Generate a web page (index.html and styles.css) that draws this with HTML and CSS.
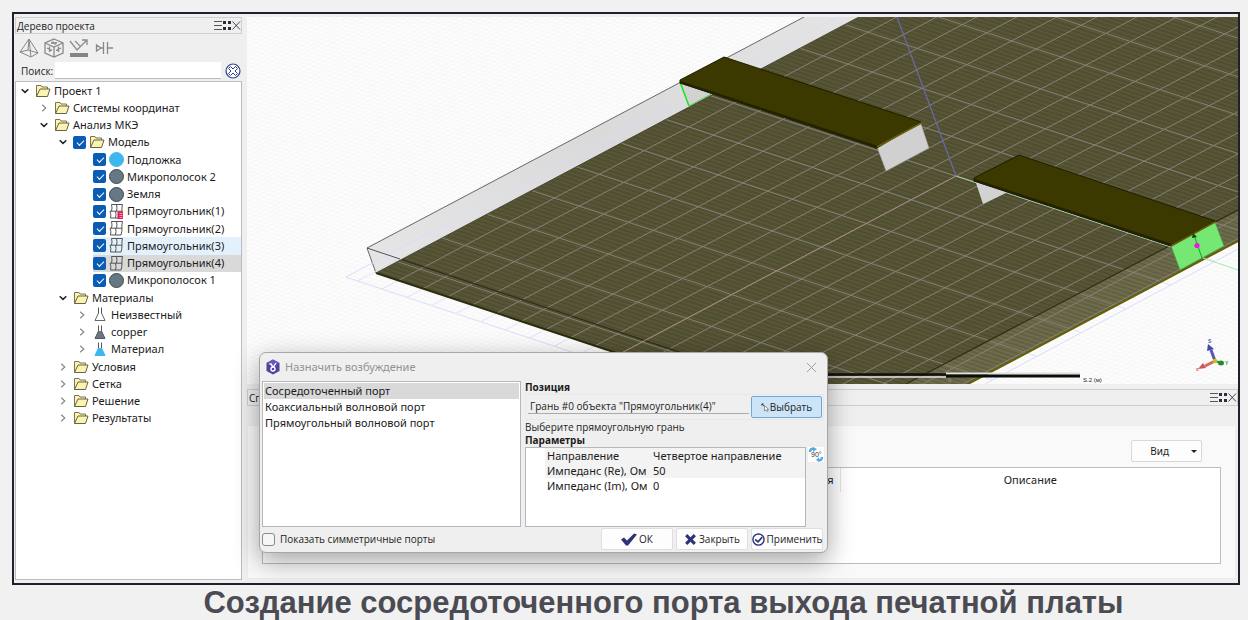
FILE: index.html
```html
<!DOCTYPE html>
<html lang="ru">
<head>
<meta charset="utf-8">
<title>Создание сосредоточенного порта</title>
<link rel="stylesheet" href="styles.css">
</head>
<body>
<svg class="defs" aria-hidden="true">
  <symbol id="folder" viewBox="0 0 16 14"><path d="M1.5 12.5V1.5H6L7 3H12.5V5" fill="#fbf3b4" stroke="#77744f"/><path d="M1.5 12.5L5 5H15L12.5 12.5Z" fill="#fbf3b4" stroke="#66633f"/></symbol>
  <symbol id="down" viewBox="0 0 8 8"><path d="M0.7 2.2L4 5.4L7.3 2.2" fill="none" stroke="#222" stroke-width="1.5"/></symbol>
  <symbol id="right" viewBox="0 0 8 8"><path d="M2.2 0.7L5.8 4L2.2 7.3" fill="none" stroke="#888" stroke-width="1.2"/></symbol>
  <symbol id="rect" viewBox="0 0 14 15"><path d="M2.500 .5Q3.500 4 2.500 7.200M7.500 .5Q8.500 4 7.500 7.200M13.500 .5Q12.500 4 13 7.200M2.500 .5H13.500M1 7.200H13M1 7.200Q2.500 10.500 1.500 14M6.500 7.200Q7.500 10.500 6.500 14M13 7.200Q13 11 12 14M1.500 14H12" fill="none" stroke="currentColor"/></symbol>
  <symbol id="flask" viewBox="0 0 12 15"><path d="M4.500 6.500V.5M7.500 6.500V.5" fill="none" stroke="#555"/><path d="M4.500 6L1 13.500H11L7.500 6" fill="currentColor" stroke="var(--edge)"/></symbol>
  <symbol id="dock" viewBox="0 0 27 12"><path d="M0 1.500H8M0 5.500H8M0 9.500H8" stroke="#555" fill="none"/><path d="M9 1h3v3h-3zM14 1h3v3h-3zM9 7h3v3h-3zM14 7h3v3h-3z" fill="#2c2c3c"/><path d="M18.500 1.500L26 9.500M26 1.500L18.500 9.500" stroke="#444455" fill="none"/></symbol>
</svg>

<main class="window">
  <aside class="project">
    <header class="dock-title"><span>Дерево проекта</span><svg class="dock"><use href="#dock"/></svg></header>
    <div class="tools">
      <button aria-label="Пирамида"><svg viewBox="0 0 20 20"><path d="M10 1L1 14L12 19L19 15ZM10 1L12 19M1 14L9 12L19 15M10 1L9 12" fill="none" stroke="#888"/></svg></button>
      <button aria-label="Куб"><svg viewBox="0 0 20 20"><path d="M10 1L19 5V15L10 19L1 15V5ZM1 5L10 9L19 5M10 9V19M3 10L8 12.500M5.500 8.500V14M12 12.500L17 10M14.500 8.500V14M7 5H13M8.500 3.500L11.500 6.500" fill="none" stroke="#888" stroke-width="1.300"/></svg></button>
      <button aria-label="Отражение"><svg viewBox="0 0 20 20"><path d="M1 3L8 12L18 2M13 2H18V7M6 3L11 8" fill="none" stroke="#8c8c8c" stroke-width="1.300"/><path d="M1 15h18v4H1z" fill="#858585"/></svg></button>
      <button aria-label="Порт"><svg viewBox="0 0 20 20"><path d="M2.500 7V13L7 10ZM7 10H9.500M9.500 4V16M13.500 4V16M13.500 10H19" fill="none" stroke="#888" stroke-width="1.300"/></svg></button>
    </div>
    <div class="search">
      <label for="search">Поиск:</label><input id="search" type="text">
      <button aria-label="Очистить"><svg viewBox="0 0 16 16"><circle cx="8" cy="8" r="7" fill="#fff" stroke="#333f8c" stroke-width="1.200"/><path d="M5.500 3.500L8 6L10.500 3.500L12.500 5.500L10 8L12.500 10.500L10.500 12.500L8 10L5.500 12.500L3.500 10.500L6 8L3.500 5.500Z" fill="none" stroke="#333f8c"/></svg></button>
    </div>
    <div class="tree-box">
    <ul class="tree">
      <li class="l0"><svg class="arrow"><use href="#down"/></svg><svg class="folder"><use href="#folder"/></svg><span>Проект 1</span></li>
      <li class="l1"><svg class="arrow"><use href="#right"/></svg><svg class="folder"><use href="#folder"/></svg><span>Системы координат</span></li>
      <li class="l1"><svg class="arrow"><use href="#down"/></svg><svg class="folder"><use href="#folder"/></svg><span>Анализ МКЭ</span></li>
      <li class="l2"><svg class="arrow"><use href="#down"/></svg><input type="checkbox" checked id="c0"><svg class="folder"><use href="#folder"/></svg><label for="c0">Модель</label></li>
      <li class="l3"><input type="checkbox" checked id="c1"><i class="ball sky"></i><label for="c1">Подложка</label></li>
      <li class="l3"><input type="checkbox" checked id="c2"><i class="ball"></i><label for="c2">Микрополосок 2</label></li>
      <li class="l3"><input type="checkbox" checked id="c3"><i class="ball"></i><label for="c3">Земля</label></li>
      <li class="l3"><input type="checkbox" checked id="c4"><svg class="obj" viewBox="0 0 14 15"><use href="#rect"/><path d="M8.500 7.500h5.500v7.500H8.500z" fill="#e5174f"/><path d="M10.500 9.500h3M10.500 11.500h3M10.500 13.500h3" stroke="#fff" stroke-width=".6"/></svg><label for="c4">Прямоугольник(1)</label></li>
      <li class="l3"><input type="checkbox" checked id="c5"><svg class="obj"><use href="#rect"/></svg><label for="c5">Прямоугольник(2)</label></li>
      <li class="l3 hover"><input type="checkbox" checked id="c6"><svg class="obj"><use href="#rect"/></svg><label for="c6">Прямоугольник(3)</label></li>
      <li class="l3 picked"><input type="checkbox" checked id="c7"><svg class="obj"><use href="#rect"/></svg><label for="c7">Прямоугольник(4)</label></li>
      <li class="l3"><input type="checkbox" checked id="c8"><i class="ball"></i><label for="c8">Микрополосок 1</label></li>
      <li class="l2"><svg class="arrow"><use href="#down"/></svg><svg class="folder"><use href="#folder"/></svg><span>Материалы</span></li>
      <li class="l4"><svg class="arrow"><use href="#right"/></svg><svg class="flask"><use href="#flask"/></svg><span>Неизвестный</span></li>
      <li class="l4"><svg class="arrow"><use href="#right"/></svg><svg class="flask metal"><use href="#flask"/></svg><span>copper</span></li>
      <li class="l4"><svg class="arrow"><use href="#right"/></svg><svg class="flask blue"><use href="#flask"/></svg><span>Материал</span></li>
      <li class="l2"><svg class="arrow"><use href="#right"/></svg><svg class="folder"><use href="#folder"/></svg><span>Условия</span></li>
      <li class="l2"><svg class="arrow"><use href="#right"/></svg><svg class="folder"><use href="#folder"/></svg><span>Сетка</span></li>
      <li class="l2"><svg class="arrow"><use href="#right"/></svg><svg class="folder"><use href="#folder"/></svg><span>Решение</span></li>
      <li class="l2"><svg class="arrow"><use href="#right"/></svg><svg class="folder"><use href="#folder"/></svg><span>Результаты</span></li>
    </ul>
    </div>
  </aside>

  <div class="work">
    <svg class="scene" viewBox="247 17 991 367" preserveAspectRatio="xMinYMin slice" role="img" aria-label="Модель печатной платы">
      <defs>
        <pattern id="fineA" width="40" height="4" patternUnits="userSpaceOnUse" patternTransform="rotate(18)"><path d="M0 2H40" stroke="currentColor" stroke-width="1"/></pattern>
        <pattern id="fineB" width="40" height="4" patternUnits="userSpaceOnUse" patternTransform="rotate(-28)"><path d="M0 2H40" stroke="currentColor" stroke-width="1"/></pattern>
        <linearGradient id="wall" x1="0" y1="1" x2="1" y2="0"><stop offset="0" stop-color="#e6e6e7"/><stop offset=".5" stop-color="#dadadb"/><stop offset="1" stop-color="#e4e4e5"/></linearGradient>
        <clipPath id="board"><path d="M376 273L859 17H1238V241L968 384H710Z"/></clipPath>
        <clipPath id="plane"><path d="M346 277L838 17H1238V249L985 384H668Z"/></clipPath>
        <path id="grid" fill="none" d="M-412 265l2000 656m-1955.2 -679.7l2000 656m-1955.2 -679.7l2000 656m-1955.2 -679.7l2000 656m-1955.2 -679.7l2000 656m-1955.2 -679.7l2000 656m-1955.2 -679.7l2000 656m-1955.2 -679.7l2000 656m-1955.2 -679.7l2000 656m-1955.2 -679.7l2000 656m-1955.2 -679.7l2000 656m-1955.2 -679.7l2000 656m-1955.2 -679.7l2000 656m-1955.2 -679.7l2000 656m-1955.2 -679.7l2000 656m-1955.2 -679.7l2000 656m-1955.2 -679.7l2000 656m-1955.2 -679.7l2000 656m-1955.2 -679.7l2000 656m-1955.2 -679.7l2000 656m-1955.2 -679.7l2000 656m-1955.2 -679.7l2000 656m-1955.2 -679.7l2000 656
        M-434 488l1800 -952m-1775.3 960.1l1800 -952m-1775.3 960.1l1800 -952m-1775.3 960.1l1800 -952m-1775.3 960.1l1800 -952m-1775.3 960.1l1800 -952m-1775.3 960.1l1800 -952m-1775.3 960.1l1800 -952m-1775.3 960.1l1800 -952m-1775.3 960.1l1800 -952m-1775.3 960.1l1800 -952m-1775.3 960.1l1800 -952m-1775.3 960.1l1800 -952m-1775.3 960.1l1800 -952m-1775.3 960.1l1800 -952m-1775.3 960.1l1800 -952m-1775.3 960.1l1800 -952m-1775.3 960.1l1800 -952m-1775.3 960.1l1800 -952m-1775.3 960.1l1800 -952m-1775.3 960.1l1800 -952m-1775.3 960.1l1800 -952m-1775.3 960.1l1800 -952m-1775.3 960.1l1800 -952m-1775.3 960.1l1800 -952m-1775.3 960.1l1800 -952m-1775.3 960.1l1800 -952m-1775.3 960.1l1800 -952m-1775.3 960.1l1800 -952m-1775.3 960.1l1800 -952m-1775.3 960.1l1800 -952m-1775.3 960.1l1800 -952m-1775.3 960.1l1800 -952m-1775.3 960.1l1800 -952m-1775.3 960.1l1800 -952m-1775.3 960.1l1800 -952m-1775.3 960.1l1800 -952m-1775.3 960.1l1800 -952m-1775.3 960.1l1800 -952m-1775.3 960.1l1800 -952m-1775.3 960.1l1800 -952m-1775.3 960.1l1800 -952m-1775.3 960.1l1800 -952"/>
      </defs>
      <rect x="247" y="17" width="991" height="367" fill="#fefefe"/>
      <g color="#8888a0" opacity=".03"><rect x="247" y="17" width="991" height="367" fill="url(#fineA)"/><rect x="247" y="17" width="991" height="367" fill="url(#fineB)"/></g>
      <path d="M367 248L804 17H859L376 273Z" fill="url(#wall)"/>
      <path d="M376 273L367 248L804 17" fill="none" stroke="#666"/>
      <g clip-path="url(#plane)"><use href="#grid" stroke="#dcdcf6" stroke-width=".8"/></g>
      <path d="M668 384L346 277L838 17M1238 249L985 384" fill="none" stroke="#dcdcf8"/>
      <g clip-path="url(#board)">
        <rect x="367" y="17" width="871" height="367" fill="#595736"/>
        <path d="M1238 210L906 384H968L1238 241Z" fill="#6f6d4b"/>
        <g color="#3b3a17" opacity=".3"><rect x="367" y="17" width="871" height="367" fill="url(#fineA)"/></g>
        <g color="#85846a" opacity=".04"><rect x="367" y="17" width="871" height="367" fill="url(#fineB)"/></g>
        <use href="#grid" stroke="#858279" stroke-width="1"/>
        <path d="M1238 210L906 384M367 248L776 384" fill="none" stroke="#2e2d17" stroke-width="1.200"/>
      </g>
      <path d="M367 248L400 259" stroke="#555"/>
      <path d="M376 273L710 384" stroke="#2c2b0a" stroke-width="2"/>
      <path d="M376 273L859 17" stroke="#4b4a28"/>
      <path d="M1238 241L968 384" stroke="#655f08" stroke-width="2"/>
      <path d="M897 17L956 176" stroke="#6969ad" stroke-width="1.200"/>
      <path d="M956 176L623 352" stroke="#a88580"/>
      <path d="M956 176L1171 247" stroke="#9fc6a1" stroke-width="1.200"/>

      <path d="M680 82L689 106L714 93Z" fill="#d2d2d2"/>
      <path d="M680 82L689 106" stroke="#17e51b" stroke-width="1.600"/><path d="M689 106L713 93" stroke="#4bd34c"/>
      <path d="M877 147L921 124L929 148L886 171Z" fill="#d0d0d0" stroke="#999" stroke-width=".5"/>
      <path d="M680 80L724 57L921 122L877 148L680 83Z" fill="#3c3900" stroke="#1f1d02"/>
      <path d="M680 82L877 147" stroke="#242104" stroke-width="2.500"/><path d="M877 147L921 123" stroke="#6a6407" stroke-width="1.500"/>

      <path d="M975 180L983 204L1008 192Z" fill="#d2d2d2"/>
      <path d="M1171 246L1215 222L1224 246L1180 270Z" fill="#74e873" stroke="#4a9b43" stroke-width=".7"/>
      <path d="M974 178L1019 155L1215 221L1171 246L974 181Z" fill="#3c3900" stroke="#1f1d02"/>
      <path d="M974 180L1171 245" stroke="#242104" stroke-width="2.500"/><path d="M1171 246L1215 222" stroke="#6d5a06" stroke-width="1.500"/>
      <path d="M1202 258L1194 235" stroke="#189d2c"/><path d="M1193 233L1192 238L1197 237Z" fill="#173e16"/>
      <circle cx="1197" cy="245.500" r="2.600" fill="#f013e8"/>
      <path d="M1203 258L1238 270" stroke="#a7eaa7"/>

      <path d="M828 377H946" stroke="#e8dfe2" stroke-width="1.500"/><path d="M828 374.500H946" stroke="#111" stroke-width="2.500"/>
      <path d="M946 373.500H1080" stroke="#dfe2d8" stroke-width="2"/><path d="M946 376H1080" stroke="#0b0f0b" stroke-width="3"/>
      <g font-family="Liberation Sans, sans-serif" font-size="6"><text x="948" y="382" fill="#999">0</text><text x="1083" y="382" fill="#222">S.2 (м)</text></g>

      <path d="M1215 361L1211 350" stroke="#5558b8" stroke-width="3"/><path d="M1208 344L1207 351L1214 349Z" fill="#4548a8"/>
      <path d="M1215 361L1205 366" stroke="#d96666" stroke-width="3"/><path d="M1198 369L1203 363L1206 368Z" fill="#cf5555"/>
      <path d="M1215 361L1222 363" stroke="#258a34" stroke-width="2"/><ellipse cx="1221" cy="363" rx="3" ry="2.500" fill="#258a34"/><circle cx="1215" cy="361" r="2.300" fill="#c8c310"/>
      <g font-family="Liberation Sans, sans-serif" font-size="5" font-weight="700"><text x="1208" y="343" fill="#5558b8">S</text><text x="1196" y="371" fill="#d55">x</text><text x="1225" y="365" fill="#2a9d3a">Y</text></g>
    </svg>

    <section class="bottom">
      <header class="dock-title"><span>Сп</span><svg class="dock"><use href="#dock"/></svg></header>
      <div class="panel">
        <div class="bar"><button class="view">Вид<i class="caret"></i></button></div>
        <div class="results"><table><thead><tr><th class="used">ся</th><th class="about">Описание</th></tr></thead></table></div>
      </div>
    </section>
  </div>
</main>

<h1>Создание сосредоточенного порта выхода печатной платы</h1>

<section class="dialog" role="dialog" aria-labelledby="dlg">
  <header>
    <svg class="logo" viewBox="0 0 14 16"><path d="M7 .5L13.500 4V12L7 15.500L.5 12V4Z" fill="#5442a0"/><path d="M7 .5L13.500 4L7 7L.5 4Z" fill="#6a5ac0"/><path d="M3.500 5L5 5L7 8M10 4L7.500 8" fill="none" stroke="#fff" stroke-width="1.400"/><circle cx="7" cy="10" r="2" fill="none" stroke="#fff" stroke-width="1.400"/></svg>
    <h2 id="dlg">Назначить возбуждение</h2>
    <button class="close" aria-label="Закрыть окно"><svg viewBox="0 0 12 12"><path d="M1 1L11 11M11 1L1 11" stroke="#999" fill="none"/></svg></button>
  </header>
  <div class="content">
    <ul class="ports"><li class="picked">Сосредоточенный порт</li><li>Коаксиальный волновой порт</li><li>Прямоугольный волновой порт</li></ul>
    <div class="settings">
      <h3><label for="face">Позиция</label></h3>
      <div class="position">
        <input id="face" type="text" value='Грань #0 объекта "Прямоугольник(4)"'>
        <button class="choose"><svg viewBox="0 0 9 10"><path d="M1 1L4 4M1 1H3M1 1V3" stroke="#333" fill="none"/><path d="M4 3V9L5.500 7.500L7 9.500L8 9L7 7H8.500Z" fill="#fff" stroke="#555" stroke-width=".7"/></svg>Выбрать</button>
      </div>
      <p>Выберите прямоугольную грань</p>
      <h3>Параметры</h3>
      <div class="params">
        <div class="grid"><table>
          <tr class="alt"><th scope="row">Направление</th><td>Четвертое направление</td></tr>
          <tr class="alt"><th scope="row">Импеданс (Re), Ом</th><td>50</td></tr>
          <tr><th scope="row">Импеданс (Im), Ом</th><td>0</td></tr>
        </table></div>
        <button class="rotate" aria-label="Повернуть на 90°"><svg viewBox="0 0 16 15"><path d="M2 5Q2 1 6 2M14 10Q14 14 10 13" fill="none" stroke="#5aa9dc" stroke-width="2.500"/><path d="M5 0L9 2L5 5ZM11 10L8 13L11 15Z" fill="#5aa9dc"/><text x="3" y="10" font-size="7" font-family="Liberation Sans, sans-serif" fill="#333">90°</text></svg></button>
      </div>
    </div>
  </div>
  <footer>
    <label class="sym"><input type="checkbox">Показать симметричные порты</label>
    <button><svg class="wide" viewBox="0 0 16 12"><path d="M0 6L3 4L6 7L13 0L16 1L7 12H5Z" fill="#2b3379"/></svg>ОК</button>
    <button><svg viewBox="0 0 12 12"><path d="M1 3L3 1L6 4L9 1L11 3L8 6L11 9L9 11L6 8L3 11L1 9L4 6Z" fill="#2b3379"/></svg>Закрыть</button>
    <button><svg viewBox="0 0 14 14"><circle cx="7" cy="7" r="6" fill="#fff" stroke="#2b3379" stroke-width="1.500"/><path d="M3.500 7L6.500 9.500L11 4.500" fill="none" stroke="#2b3379" stroke-width="1.800"/></svg>Применить</button>
  </footer>
</section>
</body>
</html>
```
FILE: styles.css
```css
* { box-sizing: border-box; }
body {
  margin: 0;
  min-height: 100vh;
  padding: 12px 8px 0 12px;
  display: grid;
  grid-template-rows: 1fr 35px;
  background: #f1f1f1;
  color: #1c1c1c;
  font: 11px/14px "Noto Sans", sans-serif;
}
button, input { font: inherit; color: inherit; }
button { border: 0; padding: 0; background: none; }
svg { display: block; flex: none; }
.defs { position: absolute; width: 0; height: 0; }
.window {
  display: grid;
  grid-template-columns: 228px 1fr;
  gap: 5px;
  border: 2px solid #20202c;
  background: #efefef;
  min-width: 0;
}
.project { display: flex; flex-direction: column; padding: 3px 0 3px 1px; }
.dock-title {
  display: flex;
  align-items: center;
  justify-content: space-between;
  height: 17px;
  padding-left: 1px;
  border: 1px solid #cfcfcf;
  font: 10px/14px "Open Sans", sans-serif;
}
.dock { width: 27px; height: 12px; }
.tools { display: flex; gap: 5px; padding: 4px 4px 2px; }
.tools button, .tools svg { width: 20px; height: 20px; }
.search {
  display: flex;
  align-items: center;
  gap: 2px;
  height: 21px;
  padding: 2px 1px 2px 6px;
  font: 10px/14px "Open Sans", sans-serif;
}
.search input { flex: 1; min-width: 0; height: 17px; border: 0; border-bottom: 1px solid #bbb; background: #fff; }
.search button { margin-left: 2px; }
.search svg { width: 16px; height: 16px; }
.tree-box { flex: 1; border: 1px solid #b9bcc2; background: #fff; }
.tree { display: grid; grid-auto-rows: 1fr; height: 345px; margin: 0; padding: 0; list-style: none; }
.tree li { display: flex; align-items: center; gap: 3px; white-space: nowrap; }
.tree .arrow { width: 8px; height: 8px; margin-right: 3px; }
.l0 { margin-left: 5px; }
.l1 { margin-left: 24px; }
.l2 { margin-left: 43px; }
.l3 { margin-left: 77px; }
.l4 { margin-left: 62px; }
.folder { width: 16px; height: 14px; }
.obj { width: 14px; height: 15px; margin: 0 1px 0 0; color: #555; }
.flask { width: 12px; height: 15px; margin: 0 2px; color: #fff; --edge: #666; }
.flask.metal { color: #667884; --edge: #556; }
.flask.blue { color: #3eb7ef; --edge: #3eb7ef; }
.ball { width: 15px; height: 15px; border-radius: 50%; border: 1px solid #3d4850; background: #667884; }
.ball.sky { background: #3eb7ef; border-color: #3eb7ef; }
.hover { background: #e3f1fd; }
.picked { background: #d9d9d9; }
.tree input {
  appearance: none;
  width: 13px;
  height: 13px;
  margin: 0;
  border-radius: 2px;
  background: #0b5cb5;
}
.tree input::after {
  content: "";
  display: block;
  width: 6px;
  height: 3px;
  margin: 4px 0 0 4px;
  border: solid #fff;
  border-width: 0 0 1px 1px;
  transform: rotate(-45deg);
}
.work { display: flex; flex-direction: column; min-width: 0; padding-top: 3px; }
.scene { flex: 1 1 0; min-height: 0; width: 100%; }
.bottom { padding: 5px 0 4px; }
.panel { margin: 19px 2px 0 0; padding: 14px 14px 14px; background: #f9f9f9; border: 1px solid #ededed; }
.bar { display: flex; justify-content: flex-end; padding-right: 19px; }
.view {
  display: flex;
  align-items: center;
  justify-content: flex-end;
  gap: 22px;
  width: 71px;
  height: 22px;
  padding-right: 4px;
  border: 1px solid #d8d8d8;
  border-radius: 2px;
  background: #fdfdfd;
  font-size: 10px;
}
.caret { border: 3px solid transparent; border-top-color: #222; border-bottom: 0; }
.results { height: 97px; margin-top: 5px; border: 1px solid #bdbdbd; background: #fff; }
table { width: 100%; border-collapse: collapse; }
th { font-weight: 400; }
.results th { height: 24px; padding: 0; }
.results .used { padding-right: 6px; text-align: right; border-right: 1px solid #e4e4e4; }
.results .about { width: 380px; }
h1 {
  margin: 0;
  color: #4b4b53;
  font: 700 31px/35px "Liberation Sans", sans-serif;
  text-align: center;
  white-space: nowrap;
  padding-left: 75px;
}
.dialog {
  position: absolute;
  left: 259px;
  top: 352px;
  width: 569px;
  padding: 0 2px 2px;
  border: 1px solid #a6a6a6;
  border-radius: 7px;
  background: #efefef;
  box-shadow: 0 8px 26px rgba(0, 0, 0, .36);
}
.dialog header {
  display: flex;
  align-items: center;
  gap: 5px;
  height: 28px;
  padding: 0 8px 0 4px;
}
.logo { width: 14px; height: 16px; }
.dialog h2 { flex: 1; margin: 0; color: #929292; font: 400 11px/14px "Noto Sans", sans-serif; }
.close svg { width: 11px; height: 11px; }
.content { display: grid; grid-template-columns: 259px 1fr; gap: 4px; }
.ports { margin: 0; padding: 1px; list-style: none; border: 1px solid #b4b7bd; background: #fff; }
.ports li { height: 16px; padding-left: 1px; line-height: 16px; }
.settings { font: 10px/12px "Open Sans", sans-serif; }
.settings h3 { margin: 0; font: 700 10px/13px "Noto Sans", sans-serif; }
.settings p { margin: 1px 0 0; line-height: 13px; }
.position { display: flex; gap: 2px; margin-right: 1px; padding: 1px 1px 1px 2px; border: 1px solid #e8e8e8; }
.position input { flex: 1; min-width: 0; height: 18px; padding: 3px 2px 0; border: 0; border-bottom: 1px solid #aaa; background: none; font-size: 10px; }
.choose {
  display: flex;
  align-items: center;
  justify-content: center;
  gap: 1px;
  width: 71px;
  height: 22px;
  border: 1px solid #6fa8d8;
  border-radius: 2px;
  background: #cce4f7;
}
.choose svg { width: 8px; height: 9px; }
.params { display: flex; align-items: flex-start; gap: 2px; }
.params .grid { flex: 1; height: 80px; padding-left: 19px; border: 1px solid #b4b7bd; background: #fff; font: 11px/15px "Noto Sans", sans-serif; }
.params th, .params td { height: 15px; padding: 0 0 0 2px; line-height: 15px; text-align: left; white-space: nowrap; }
.params th { width: 106px; }
.alt { background: #f3f3f3; }
.rotate { width: 16px; margin-right: 1px; background: #fff; }
.rotate svg { width: 16px; height: 15px; }
.dialog footer { display: flex; align-items: center; gap: 3px; padding: 1px 2px 0 0; font: 10px/14px "Open Sans", sans-serif; }
.sym { flex: 1; display: flex; align-items: center; gap: 5px; }
.sym input { appearance: none; width: 13px; height: 13px; margin: 0; border: 1px solid #8a8a8a; border-radius: 3px; background: #f6f6f6; }
.dialog footer button {
  display: flex;
  align-items: center;
  justify-content: center;
  gap: 2px;
  width: 72px;
  height: 22px;
  border: 1px solid #dedede;
  border-radius: 2px;
  background: #fdfdfd;
}
.dialog footer svg { width: 13px; height: 13px; }
.dialog footer .wide { width: 16px; }
```
